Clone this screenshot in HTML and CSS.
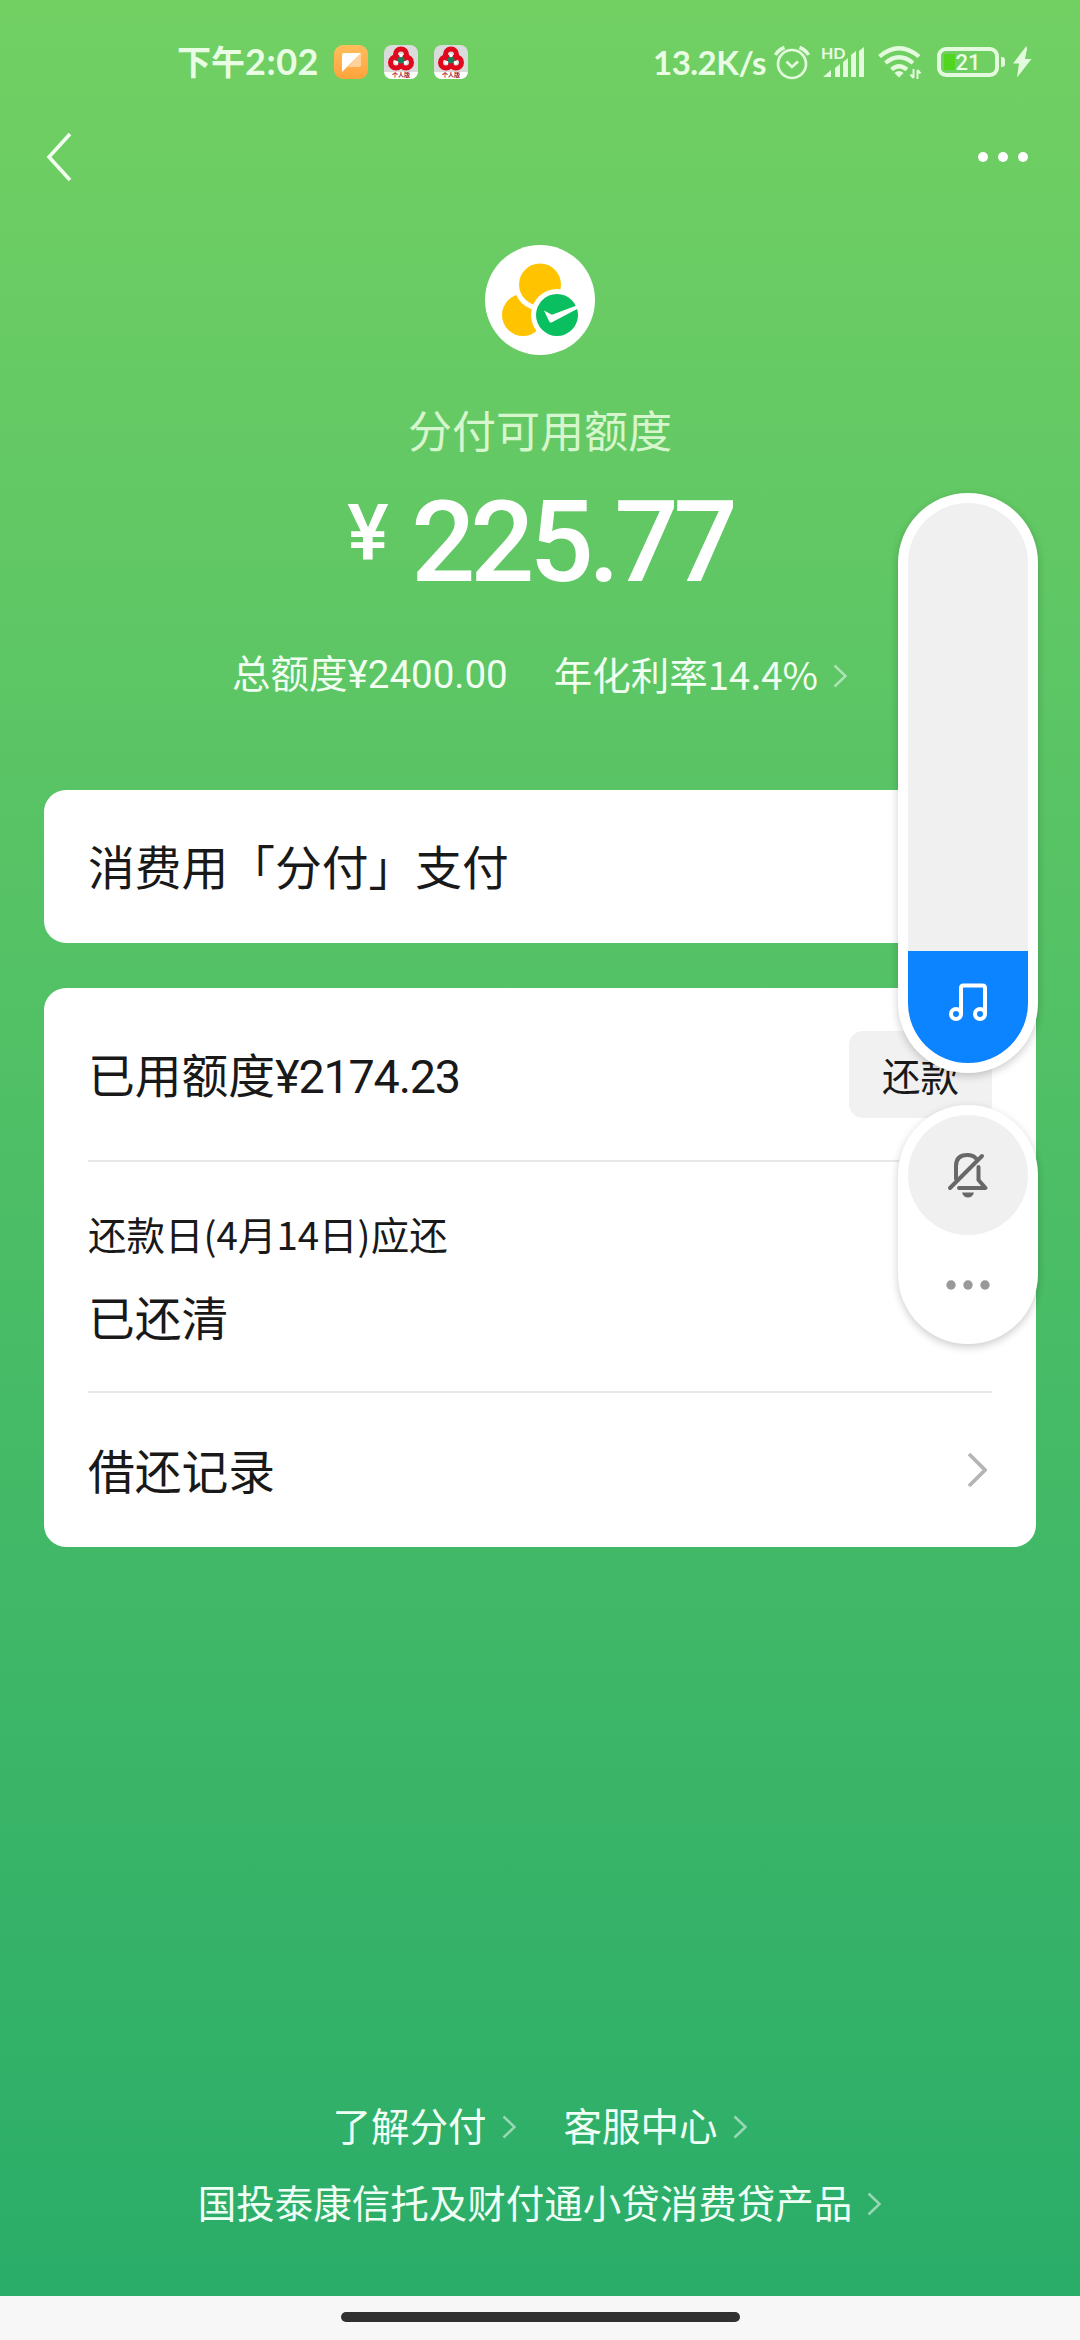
FILE: index.html
```html
<!DOCTYPE html>
<html lang="zh-CN">
<head>
<meta charset="UTF-8">
<title>分付</title>
<link rel="stylesheet" href="styles.css">
</head>
<body>
<svg class="symbols">
  <symbol id="chev" viewBox="0 0 15 24"><path d="m1.500 1.500 11 10.500-11 10.500" fill="none" stroke="#fff" stroke-opacity=".5" stroke-width="2.500"/></symbol>
  <symbol id="bank" viewBox="0 0 34 34"><rect width="34" height="34" rx="8" fill="#d9dcda"/><path d="M0 27h34q-1 7-8 7H8q-7 0-8-7Z" fill="#fff"/><g fill="none" stroke="#e0081c" stroke-width="5"><circle cx="17" cy="9.500" r="5.500"/><circle cx="12" cy="17.500" r="5.500"/><circle cx="22" cy="17.500" r="5.500"/></g><circle cx="17" cy="15" r="3.500" fill="#16805a"/><g fill="#fff"><circle cx="17" cy="10.500" r="1.800"/><circle cx="12.500" cy="17.500" r="1.800"/><circle cx="21.500" cy="17.500" r="1.800"/></g></symbol>
</svg>
<div class="screen">
  <header class="status-bar">
    <div class="status-left">
      <span class="time">下午<span class="clock">2:02</span></span>
      <svg class="app-icon" viewBox="0 0 34 34"><defs><linearGradient id="og" x2="0" y2="1"><stop stop-color="#ffbd5c"/><stop offset="1" stop-color="#ffa33c"/></linearGradient></defs><rect width="34" height="34" rx="9" fill="url(#og)"/><path d="M27 8v12q0 2-2 2H14Z" fill="#ffd29b"/><path d="M10 8H27L8 27V10q0-2 2-2Z" fill="#fff"/></svg>
      <span class="app-icon bank"><svg viewBox="0 0 34 34"><use href="#bank"/></svg><small>个人版</small></span>
      <span class="app-icon bank"><svg viewBox="0 0 34 34"><use href="#bank"/></svg><small>个人版</small></span>
    </div>
    <div class="status-right">
      <span class="speed">13.2K/s</span>
      <svg class="alarm" width="36" height="36" viewBox="0 0 36 36" fill="none" stroke="#e3fadd" stroke-width="2.700"><circle cx="18" cy="20" r="14"/><path d="m12.500 17.500 5.500 5.500 6-5.500"/><path d="M1.500 11Q4 6 10.500 3.500M25.500 3.500Q32 6 34.500 11" stroke-width="3.500"/></svg>
      <span class="signal"><span class="hd">HD</span>
        <svg width="42" height="32" viewBox="0 0 42 32" fill="#e3fadd"><path d="M0 31 8 24v7ZM12 22l5-4v13h-5ZM20 16l5-4v19h-5ZM28 9l5-4v26h-5ZM36 5l5-4v30h-5Z"/></svg></span>
      <svg class="wifi" width="44" height="34" viewBox="0 0 44 34" fill="none" stroke="#e3fadd" stroke-width="4.200"><path d="M1.500 11.500Q21 -5 41 11.500M7.500 18Q21 6.500 35 18M13.500 24.500Q21 18 29 24.500"/><path d="M16.500 28q4.500-4 9 0L21 32.500Z" fill="#e3fadd" stroke="none"/><path d="M35.500 24v9M35.500 33l-3-3.500M39.500 34v-9M39.500 25l3 3.500" stroke-width="2"/></svg>
      <span class="battery"><span class="level"></span><span class="percent">21</span></span>
      <span class="nub"></span>
      <svg class="bolt" width="20" height="32" viewBox="0 0 20 32" fill="#e3fadd"><path d="M14.500 0 1 17.500h6L5 31.500 19.500 13h-6.500L15 3Z"/></svg>
    </div>
  </header>

  <nav class="nav-bar">
    <svg width="26" height="50" viewBox="0 0 26 50" fill="none" stroke="#f2fff0" stroke-width="3.600"><path d="M24 2 3 25 24 48"/></svg>
    <svg width="50" height="12" viewBox="0 0 50 12" fill="#fff"><circle cx="5" cy="6" r="5"/><circle cx="25" cy="6" r="5"/><circle cx="45" cy="6" r="5"/></svg>
  </nav>

  <main>
    <section class="summary">
      <svg class="logo" width="110" height="110" viewBox="0 0 110 110"><circle cx="55" cy="55" r="55" fill="#fff"/><circle cx="38" cy="70" r="21" fill="#ffc300"/><circle cx="55" cy="39.500" r="26" fill="#fff"/><circle cx="55" cy="39.500" r="21" fill="#ffc300"/><circle cx="72" cy="70" r="26" fill="#fff"/><circle cx="72" cy="70" r="21" fill="#0abf5f"/><path d="m59 65.500 6.500 3.500q1.500 1 3.500 0L93 60v3.500L67.500 77q-2.500 1.500-3.500-1Z" fill="#fff"/></svg>
      <h1>分付可用额度</h1>
      <div class="amount"><span class="yen">¥</span><span class="value">225.77</span></div>
      <div class="details"><span>总额度<span class="num">¥2400.00</span></span><span class="rate">年化利率14.4%<svg class="arrow" viewBox="0 0 15 24"><use href="#chev"/></svg></span></div>
    </section>

    <section class="card pay">消费用「分付」支付</section>

    <section class="card account">
      <div class="row used"><span>已用额度<span class="num">¥2174.23</span></span><button>还款</button></div>
      <div class="row due"><span class="due-label">还款日(4月14日)应还</span><span>已还清</span></div>
      <div class="row record"><span>借还记录</span><svg width="20" height="36" viewBox="0 0 20 36" fill="none" stroke="#b5b5b5" stroke-width="3.800"><path d="m2 2 16 16L2 34"/></svg></div>
    </section>
  </main>

  <footer>
    <div class="links"><span>了解分付<svg class="arrow" viewBox="0 0 15 24"><use href="#chev"/></svg></span><span>客服中心<svg class="arrow" viewBox="0 0 15 24"><use href="#chev"/></svg></span></div>
    <div class="provider">国投泰康信托及财付通小贷消费贷产品<svg class="arrow" viewBox="0 0 15 24"><use href="#chev"/></svg></div>
  </footer>
  <div class="gesture"><span></span></div>

  <aside class="volume">
    <div class="slider"><div class="track"><div class="fill">
      <svg width="40" height="40" viewBox="0 0 40 40" fill="none" stroke="#fff" stroke-width="4"><circle cx="8" cy="31" r="5"/><circle cx="32" cy="31" r="5"/><path d="M13 31V5q0-2.500 2.500-2.500h19Q37 2.500 37 5v26"/></svg>
    </div></div></div>
    <div class="modes">
      <div class="mute"><svg width="42" height="46" viewBox="0 0 42 46" fill="none" stroke="#686868" stroke-width="4" stroke-linecap="round" stroke-linejoin="round"><path d="M9 27V14Q9 3 20.500 3 26 3 29 6.500M31.500 15v13l7 8H12M3 36 35 4"/><path d="M15 40.500h12q-1.500 5-6 5t-6-5Z" fill="#686868" stroke="none"/></svg></div>
      <svg class="more" width="44" height="10" viewBox="0 0 44 10" fill="#999"><circle cx="5" cy="5" r="4.700"/><circle cx="22" cy="5" r="4.700"/><circle cx="39" cy="5" r="4.700"/></svg>
    </div>
  </aside>
</div>
</body>
</html>
```
FILE: styles.css
```css
* { box-sizing: border-box; }
body { margin: 0; font-family: "Noto Sans CJK SC", sans-serif; }
svg { display: block; flex: none; }
.symbols { display: none; }
.screen {
  position: relative;
  display: flex;
  flex-direction: column;
  width: 1080px;
  height: 2340px;
  overflow: hidden;
  background: linear-gradient(#72d063 0, #2aad69 2296px);
  color: #191919;
}

.status-bar {
  display: flex;
  justify-content: space-between;
  height: 124px;
  padding: 45px 48px 0 177px;
  color: #e9fde4;
}
.status-left, .status-right { display: flex; height: 34px; align-items: center; }
.time { width: 157px; margin-top: -3px; font-size: 34px; font-weight: 700; white-space: nowrap; }
.clock { font-family: Lato, sans-serif; font-size: 36px; letter-spacing: .5px; }
.app-icon { width: 34px; height: 34px; margin-right: 16px; }
.bank { display: grid; }
.bank > * { grid-area: 1 / 1; }
.bank small { align-self: end; justify-self: center; font-size: 6px; line-height: 8px; font-weight: 700; color: #a22233; }
.speed { width: 121px; font-family: Lato, sans-serif; font-size: 33px; font-weight: 700; letter-spacing: -.5px; white-space: nowrap; }
.alarm { margin-right: 13px; }
.signal { position: relative; margin-right: 13px; }
.hd { position: absolute; left: -2px; top: -1px; font: 700 16px/15px Lato, sans-serif; }
.wifi { margin-right: 15px; }
.battery {
  position: relative;
  width: 62px;
  height: 30px;
  padding: 3px;
  border: 4px solid #e3fadd;
  border-radius: 9px;
}
.level { display: block; width: 11px; height: 16px; background: #52d51e; }
.percent { position: absolute; inset: 0; font: 500 22px/23px Roboto, sans-serif; text-align: center; }
.nub { width: 4px; height: 10px; margin: 0 7px 0 2px; background: #e3fadd; border-radius: 0 3px 3px 0; }

.nav-bar { display: flex; justify-content: space-between; align-items: center; height: 66px; padding: 0 52px 0 46px; }

main { padding: 0 44px; }
.summary { display: flex; flex-direction: column; align-items: center; height: 600px; padding-top: 55px; }
h1 { margin: 42px 0 0; font-size: 44px; line-height: 64px; font-weight: 400; color: #d6f6cd; }
.amount { display: flex; align-items: flex-start; height: 112px; margin: 25px 0 0; color: #fff; font-family: Roboto, sans-serif; font-weight: 500; }
.yen { width: 64px; font-size: 78px; line-height: 93px; }
.value { font-size: 113px; line-height: 114px; letter-spacing: -5.2px; }
.details { display: flex; gap: 46px; margin-top: 45px; font-size: 38.5px; line-height: 56px; color: #f0fff0; }
.num { font-family: Roboto, sans-serif; letter-spacing: 0; }
.rate, .links span, .provider { display: flex; align-items: center; }
.arrow { width: 15px; height: 24px; margin: 5px 0 0 15px; }

.card { background: #fff; border-radius: 22px; padding: 0 44px; font-size: 46.75px; }
.pay { height: 153px; line-height: 150px; }
.account { height: 559px; margin-top: 45px; }
.row { display: flex; justify-content: space-between; align-items: center; }
.row + .row { border-top: 2px solid #e8e8e8; }
.used { height: 172px; }
.used > span, .record > span { margin-top: -3px; }
.used .num { letter-spacing: -1.2px; }
button { width: 143px; height: 87px; padding: 0; border: 0; border-radius: 14px; background: #f1f1f1; color: #191919; font: 38.5px "Noto Sans CJK SC", sans-serif; }
.due { flex-direction: column; align-items: flex-start; justify-content: flex-start; height: 231px; padding-top: 43px; line-height: 68px; }
.due-label { font-size: 38.5px; line-height: 56px; margin-bottom: 21px; }
.record { height: 156px; }
.record svg { margin-right: 5px; }

footer { margin-top: auto; padding-bottom: 67px; color: #effff6; font-size: 38.5px; line-height: 56px; }
.links { display: flex; justify-content: center; gap: 47px; margin-bottom: 21px; }
.provider { justify-content: center; }
.gesture { display: flex; justify-content: center; height: 44px; padding-top: 16px; background: #f7f7f7; }
.gesture span { width: 399px; height: 10px; border-radius: 5px; background: #303030; }

.volume { position: absolute; left: 898px; top: 493px; width: 140px; }
.slider, .modes { padding: 10px; background: #fff; border-radius: 70px; box-shadow: 0 3px 8px rgba(0, 0, 0, .2); }
.slider { height: 580px; margin-bottom: 32px; }
.track { display: flex; align-items: flex-end; height: 560px; border-radius: 60px; overflow: hidden; background: #f0f0f0; }
.fill { display: flex; justify-content: center; width: 120px; height: 112px; padding-top: 32px; background: #0d84ff; }
.modes { height: 239px; }
.mute { display: flex; align-items: center; justify-content: center; height: 120px; border-radius: 50%; background: #f0f0f0; }
.more { margin: 45px auto 0; }
```
